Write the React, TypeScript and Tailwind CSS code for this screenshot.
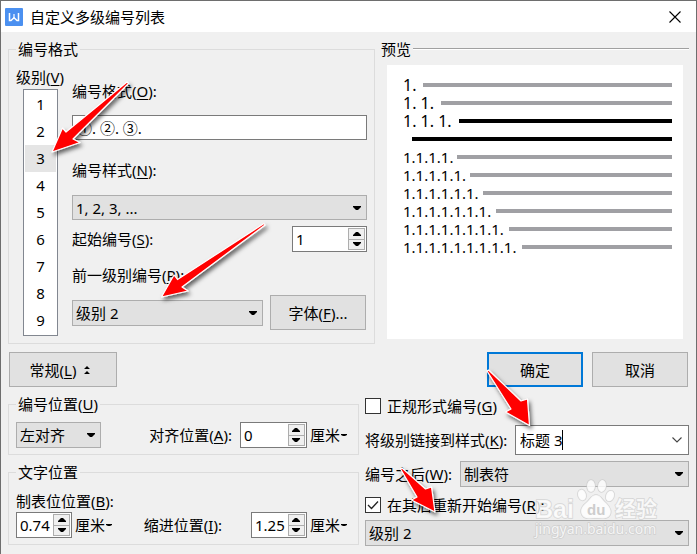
import type { ReactNode } from "react";

const LEVELS = [1, 2, 3, 4, 5, 6, 7, 8, 9];

const FIELD_TEXT = "text-[15px] leading-5";

function DownTriangle() {
  return (
    <svg viewBox="0 0 8 4" className="h-1 w-2" aria-hidden="true">
      <path d="M0 0h8v1L5 4H3L0 1z" fill="#000" />
    </svg>
  );
}

function UpTriangle() {
  return (
    <svg viewBox="0 0 8 4" className="h-1 w-2" aria-hidden="true">
      <path d="M0 4h8V3L5 0H3L0 3z" fill="#000" />
    </svg>
  );
}

function Mnemonic({ text, letter, end = "" }: { text: string; letter: string; end?: string }) {
  return (
    <>
      {text}(<span className="underline underline-offset-2">{letter}</span>){end}
    </>
  );
}

function Dropdown({
  id,
  value,
  label,
  className,
}: {
  id: string;
  value: string;
  label?: string;
  className: string;
}) {
  return (
    <div className={`relative ${className}`}>
      <select
        id={id}
        aria-label={label}
        className={`block h-full w-full appearance-none border border-[#adadad] bg-[#e1e1e1] pl-[3px] pr-5 outline-none ${FIELD_TEXT}`}
        defaultValue={value}
      >
        <option>{value}</option>
      </select>
      <span className="pointer-events-none absolute inset-y-0 right-1.5 flex items-center">
        <DownTriangle />
      </span>
    </div>
  );
}

function Spinner({ id, value, className }: { id: string; value: string; className: string }) {
  return (
    <div className={`flex h-[26px] shrink-0 border border-[#7a7a7a] bg-white p-px ${className}`}>
      <input
        id={id}
        defaultValue={value}
        className={`min-w-0 flex-1 bg-transparent pl-0.5 outline-none ${FIELD_TEXT}`}
      />
      <div className="flex w-[17px] shrink-0 flex-col border border-[#adadad] bg-[#f0f0f0]">
        <button type="button" aria-label="增加" className="flex flex-1 items-center justify-center border-b border-[#adadad]">
          <UpTriangle />
        </button>
        <button type="button" aria-label="减少" className="flex flex-1 items-center justify-center">
          <DownTriangle />
        </button>
      </div>
    </div>
  );
}

function Unit() {
  return (
    <button type="button" className="flex shrink-0 items-center pl-[3px]">
      厘米
      <svg viewBox="0 0 6 3" className="ml-px h-[3px] w-1.5" aria-hidden="true">
        <path d="M0 0h6v1L4 2H2L0 1z" fill="#000" />
      </svg>
    </button>
  );
}

function Group({ title, className = "", children }: { title: ReactNode; className?: string; children: ReactNode }) {
  return (
    <fieldset className={`min-w-0 border border-[#dcdcdc] px-[7px] ${className}`}>
      <legend className="px-0.5 leading-5">{title}</legend>
      {children}
    </fieldset>
  );
}

function PushButton({ className, children }: { className: string; children: ReactNode }) {
  return (
    <button type="button" className={`flex h-[35px] shrink-0 items-center justify-center bg-[#e1e1e1] ${className}`}>
      {children}
    </button>
  );
}

function TitleBar() {
  return (
    <header className="flex h-[31px] items-center bg-white pl-1 pr-[15px]">
      <svg viewBox="0 0 18 18" className="size-[18px]" aria-hidden="true">
        <rect width="18" height="18" rx="1" fill="#4b90f0" />
        <path d="M4.500 5v7.500h1.500L9 9.800l3 2.700h1.500V5" fill="none" stroke="#fff" strokeWidth="1.500" />
        <path d="M9 6v4" stroke="#fff" strokeWidth="1.200" />
      </svg>
      <h1 className="ml-[7px] flex-1">自定义多级编号列表</h1>
      <button type="button" aria-label="关闭">
        <svg viewBox="0 0 12 12" className="size-3" aria-hidden="true">
          <path d="M.5.5l11 11M11.5.5l-11 11" stroke="#000" strokeWidth="1.100" />
        </svg>
      </button>
    </header>
  );
}

function FormatGroup() {
  return (
    <Group title="编号格式" className="pb-[7px]">
      <div className="flex">
        <div className="w-14 shrink-0 pt-2">
          <label htmlFor="level" className="block whitespace-nowrap">
            <Mnemonic text="级别" letter="V" />
          </label>
          <select
            id="level"
            size={9}
            defaultValue="3"
            className="ml-[7px] mt-0.5 block h-[247px] w-[35px] appearance-none overflow-hidden border border-[#828790] bg-white p-px text-center outline-none"
          >
            {LEVELS.map((n) => (
              <option
                key={n}
                value={String(n)}
                className="h-[27px] px-0 pb-0 pt-[3px] text-center text-[15px] leading-6 text-black checked:bg-[linear-gradient(#e5e5e5,#e5e5e5)]"
              >
                {n}
              </option>
            ))}
          </select>
        </div>
        <div className="min-w-0 flex-1 pt-[22px]">
          <label htmlFor="format" className="block">
            <Mnemonic text="编号格式" letter="O" end=":" />
          </label>
          <input
            id="format"
            defaultValue="①. ②. ③."
            className={`mt-3.5 block h-[25px] w-full border border-[#7a7a7a] bg-white px-1 outline-none ${FIELD_TEXT}`}
          />
          <label htmlFor="style" className="mt-5 block">
            <Mnemonic text="编号样式" letter="N" end=":" />
          </label>
          <Dropdown id="style" value="1, 2, 3, ..." className="mt-[15px] h-[25px]" />
          <div className="mt-1.5 flex items-center justify-between">
            <label htmlFor="start">
              <Mnemonic text="起始编号" letter="S" end=":" />
            </label>
            <Spinner id="start" value="1" className="w-[75px]" />
          </div>
          <label htmlFor="previous" className="mt-[13px] block">
            <Mnemonic text="前一级别编号" letter="P" end=":" />
          </label>
          <div className="mt-2.5 flex items-center gap-[7px] pr-px">
            <Dropdown id="previous" value="级别 2" className="h-[26px] flex-1" />
            <PushButton className="w-24 border border-[#adadad]">
              <span>
                <Mnemonic text="字体" letter="F" end="..." />
              </span>
            </PushButton>
          </div>
        </div>
      </div>
    </Group>
  );
}

function PreviewLine({ level }: { level: number }) {
  const spaced = level <= 3;
  const label = Array.from({ length: level }, () => "1.").join(spaced ? " " : "");
  return (
    <div className="flex h-[18px] items-center gap-0.5">
      <span
        className={`shrink-0 whitespace-nowrap ${spaced ? "text-base leading-4" : "text-[15px] leading-4"}`}
        style={{ width: level * (spaced ? 18 : 13) }}
      >
        {label}
      </span>
      <span className={`h-1 flex-1 ${level === 3 ? "bg-black" : "bg-[#a0a0a4]"}`} />
    </div>
  );
}

function Preview() {
  return (
    <section className="flex flex-col pb-[5px]">
      <div className="flex items-center gap-0.5">
        <h2>预览</h2>
        <div className="h-0.5 flex-1 border-b border-t border-b-white border-t-[#a0a0a0]" />
      </div>
      <div className="mx-1.5 mt-1.5 flex-1 bg-white pb-4 pl-4 pr-[11px] pt-[11px]">
        {LEVELS.slice(0, 3).map((n) => (
          <PreviewLine key={n} level={n} />
        ))}
        <div className="flex h-[18px] items-center pl-[9px]">
          <span className="h-1 flex-1 bg-black" />
        </div>
        {LEVELS.slice(3).map((n) => (
          <PreviewLine key={n} level={n} />
        ))}
      </div>
    </section>
  );
}

function ActionRow() {
  return (
    <div className="mt-2 flex items-center px-px">
      <PushButton className="w-[108px] gap-2 border border-[#adadad] pr-1.5">
        <span>
          <Mnemonic text="常规" letter="L" />
        </span>
        <svg viewBox="0 0 6 8" className="h-2 w-1.5" aria-hidden="true">
          <path d="M3 0l3 3H0zM3 5l3 3H0z" fill="#000" />
        </svg>
      </PushButton>
      <div className="ml-auto flex gap-[9px]">
        <PushButton className="w-24 border-2 border-[#0078d7]">确定</PushButton>
        <PushButton className="w-24 border border-[#adadad]">取消</PushButton>
      </div>
    </div>
  );
}

function Positions() {
  return (
    <div className="flex min-w-0 flex-col gap-[7px]">
      <Group title={<Mnemonic text="编号位置" letter="U" />} className="pb-1.5">
        <div className="flex items-center pr-1 pt-2">
          <Dropdown id="align" label="编号位置" value="左对齐" className="h-[26px] w-[85px] shrink-0" />
          <label htmlFor="align-at" className="ml-auto mr-2 whitespace-nowrap">
            <Mnemonic text="对齐位置" letter="A" end=":" />
          </label>
          <Spinner id="align-at" value="0" className="w-[67px]" />
          <Unit />
        </div>
      </Group>
      <Group title="文字位置" className="pb-1.5">
        <label htmlFor="tab" className="mt-[9px] block">
          <Mnemonic text="制表位位置" letter="B" end=":" />
        </label>
        <div className="mt-px flex items-center pr-1">
          <Spinner id="tab" value="0.74" className="w-14" />
          <Unit />
          <label htmlFor="indent" className="ml-auto mr-[29px] whitespace-nowrap">
            <Mnemonic text="缩进位置" letter="I" end=":" />
          </label>
          <Spinner id="indent" value="1.25" className="w-14" />
          <Unit />
        </div>
      </Group>
    </div>
  );
}

function CheckBox({ id, checked, children }: { id: string; checked: boolean; children: ReactNode }) {
  return (
    <div className="flex items-center gap-1.5">
      <span className="relative size-4 shrink-0">
        <input
          id={id}
          type="checkbox"
          defaultChecked={checked}
          className="peer block size-4 appearance-none border border-[#333] bg-white"
        />
        <svg
          viewBox="0 0 16 16"
          className="pointer-events-none absolute inset-0 hidden size-4 peer-checked:block"
          aria-hidden="true"
        >
          <path d="M3 8l3.500 3.500L13 4.500" fill="none" stroke="#222" strokeWidth="1.300" />
        </svg>
      </span>
      <label htmlFor={id} className="whitespace-nowrap">
        {children}
      </label>
    </div>
  );
}

function Links() {
  return (
    <div className="min-w-0 pt-0.5">
      <CheckBox id="formal" checked={false}>
        <Mnemonic text="正规形式编号" letter="G" />
      </CheckBox>
      <div className="mt-[9px] flex items-center justify-between">
        <label htmlFor="link" className="whitespace-nowrap">
          <Mnemonic text="将级别链接到样式" letter="K" end=":" />
        </label>
        <div className="flex h-[30px] w-[174px] items-center border border-[#7a7a7a] bg-white pl-1 pr-1.5">
          <input id="link" defaultValue="标题 3" className={`field-sizing-content bg-transparent outline-none ${FIELD_TEXT}`} />
          <span className="h-5 w-px bg-black" />
          <button type="button" aria-label="选择样式" className="ml-auto">
            <svg viewBox="0 0 10 6" className="h-1.5 w-2.5" aria-hidden="true">
              <path d="M.5.5L5 5 9.500.5" fill="none" stroke="#444" strokeWidth="1.100" />
            </svg>
          </button>
        </div>
      </div>
      <div className="mt-1.5 flex items-center justify-between">
        <label htmlFor="after" className="whitespace-nowrap">
          <Mnemonic text="编号之后" letter="W" end=":" />
        </label>
        <Dropdown id="after" value="制表符" className="h-[26px] w-[229px]" />
      </div>
      <div className="mt-2">
        <CheckBox id="restart" checked>
          <Mnemonic text="在其后重新开始编号" letter="R" end=":" />
        </CheckBox>
      </div>
      <Dropdown id="restart-level" label="重新开始级别" value="级别 2" className="mt-[5px] h-[26px]" />
    </div>
  );
}

function Annotations() {
  return (
    <svg
      viewBox="0 0 697 554"
      className="pointer-events-none absolute -left-px -top-px h-[554px] w-[697px]"
      aria-hidden="true"
    >
      <defs>
        <filter id="shadow" x="-20%" y="-20%" width="150%" height="150%">
          <feDropShadow dx="2" dy="3" stdDeviation="2" floodColor="#000" floodOpacity="0.6" />
        </filter>
      </defs>
      <g fill="#f00" stroke="#fff" strokeWidth="1.200" strokeLinejoin="round" filter="url(#shadow)">
        <path d="M52 152L62.500 128L66 132L127 82L128.500 83.500L73 139L80 142.500Z" />
        <path d="M161.500 297L174 275L177.500 279.500L264 223.500L265 225L182 287L188 291Z" />
        <path d="M529.500 425.500L505.500 412L511 409L487 371L488.500 370L521 401L527.500 399Z" />
        <path d="M435 512L411.500 500L417 497L400.500 469L402 468L425.500 489L431.500 487Z" />
      </g>
      <g fill="#fff" fillOpacity="0.8" stroke="#c8c8c8" strokeOpacity="0.7" strokeWidth="1.500" paintOrder="stroke">
        <text x="535" y="518" className="font-[Liberation_Sans] text-[25px] font-bold">
          Bai
        </text>
        <ellipse cx="582" cy="495" rx="4" ry="5.500" transform="rotate(-15 582 495)" />
        <ellipse cx="591" cy="486" rx="4" ry="6" />
        <ellipse cx="602" cy="486" rx="4" ry="6" transform="rotate(8 602 486)" />
        <ellipse cx="610" cy="496" rx="4" ry="5.500" transform="rotate(20 610 496)" />
        <path d="M596 495c-5 0-6 5-10 8c-5 4-6 8-4 12c3 5 9 3 14 3s11 2 14-3c2-4 0-8-4-12c-4-3-5-8-10-8z" />
        <text x="615" y="516" className="font-[Noto_Sans_CJK_SC] text-[21px] font-bold">
          经验
        </text>
        <text x="535" y="534" className="font-[Noto_Sans] text-[14px]">
          jingyan.baidu.com
        </text>
      </g>
      <text x="587" y="515" fill="#cdcdcd" className="font-[Liberation_Sans] text-[15px] font-bold">
        du
      </text>
    </svg>
  );
}

export default function App() {
  return (
    <main className="relative border border-[#6e6e6e] bg-[#f0f0f0] font-['Noto_Sans','Noto_Sans_CJK_SC',sans-serif] text-[15px] leading-5 text-black">
      <TitleBar />
      <div className="px-[7px] pb-2 pt-[7px]">
        <div className="grid grid-cols-[367fr_308fr] gap-1.5">
          <FormatGroup />
          <Preview />
        </div>
        <ActionRow />
        <div className="mt-[7px] grid grid-cols-[351fr_324fr] gap-1.5">
          <Positions />
          <Links />
        </div>
      </div>
      <Annotations />
    </main>
  );
}
